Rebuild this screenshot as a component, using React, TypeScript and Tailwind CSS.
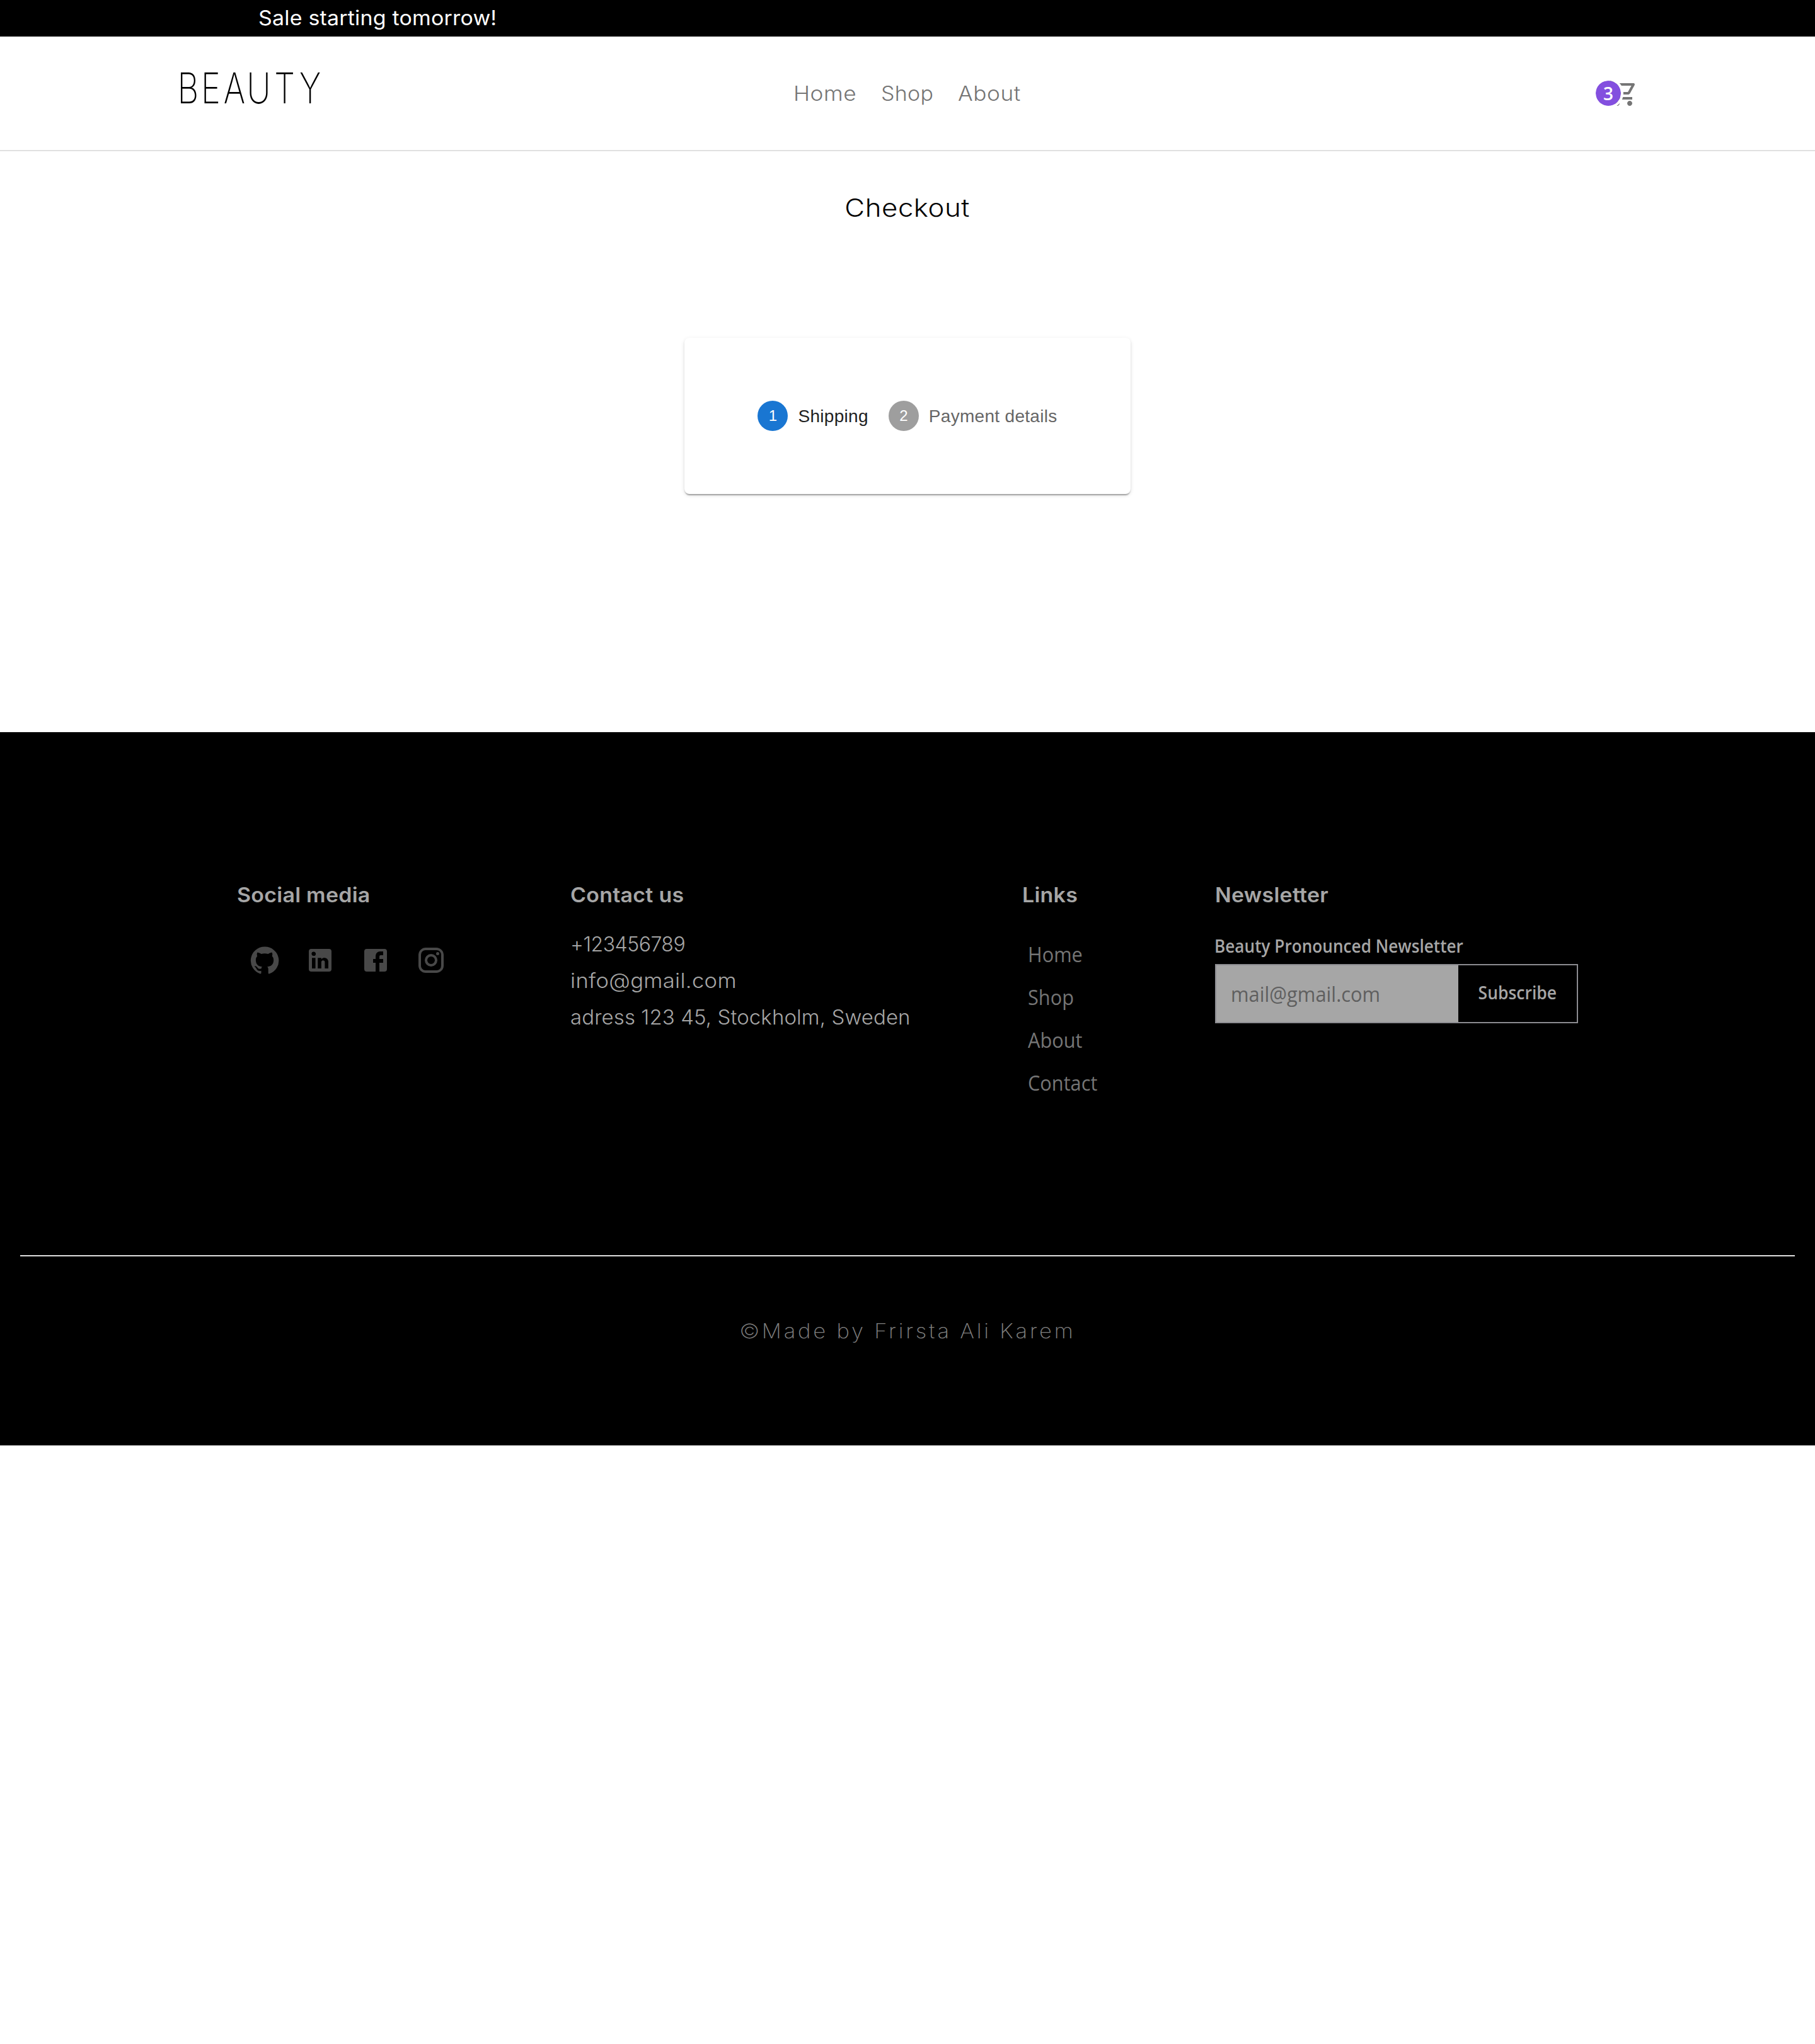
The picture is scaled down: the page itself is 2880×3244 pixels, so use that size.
import React from "react";

const socials = [
  {
    name: "GitHub",
    path: "M12 1.27a11 11 0 00-3.48 21.46c.55.09.73-.28.73-.55v-1.84c-3.03.64-3.67-1.46-3.67-1.46-.55-1.29-1.28-1.65-1.28-1.65-.92-.65.1-.65.1-.65 1.1 0 1.73 1.1 1.73 1.1.92 1.65 2.57 1.2 3.21.92a2 2 0 01.64-1.47c-2.47-.27-5.04-1.19-5.04-5.5 0-1.1.46-2.1 1.2-2.84a3.76 3.76 0 010-2.93s.91-.28 3.11 1.1c1.8-.49 3.7-.49 5.5 0 2.1-1.38 3.02-1.1 3.02-1.1a3.76 3.76 0 01.1 2.93c.83.74 1.2 1.74 1.2 2.94 0 4.21-2.57 5.13-5.04 5.4.45.37.82.92.82 2.02v3.03c0 .27.1.64.73.55A11 11 0 0012 1.27",
  },
  {
    name: "LinkedIn",
    path: "M19 3a2 2 0 0 1 2 2v14a2 2 0 0 1-2 2H5a2 2 0 0 1-2-2V5a2 2 0 0 1 2-2h14m-.5 15.5v-5.3a3.26 3.26 0 0 0-3.26-3.26c-.85 0-1.84.52-2.32 1.3v-1.11h-2.79v8.37h2.79v-4.93c0-.77.62-1.4 1.39-1.4a1.4 1.4 0 0 1 1.4 1.4v4.93h2.79M6.88 8.56a1.68 1.68 0 0 0 1.68-1.68c0-.93-.75-1.69-1.68-1.69a1.69 1.69 0 0 0-1.69 1.69c0 .93.76 1.68 1.69 1.68m1.39 9.94v-8.37H5.5v8.37h2.77z",
  },
  {
    name: "Facebook",
    path: "M5 3h14a2 2 0 0 1 2 2v14a2 2 0 0 1-2 2H5a2 2 0 0 1-2-2V5a2 2 0 0 1 2-2m13 2h-2.5A3.5 3.5 0 0 0 12 8.5V11h-2v3h2v7h3v-7h3v-3h-3V9a1 1 0 0 1 1-1h2V5z",
  },
  {
    name: "Instagram",
    path: "M7.8 2h8.4C19.4 2 22 4.6 22 7.8v8.4a5.8 5.8 0 0 1-5.8 5.8H7.8C4.6 22 2 19.4 2 16.2V7.8A5.8 5.8 0 0 1 7.8 2m-.2 2A3.6 3.6 0 0 0 4 7.6v8.8C4 18.39 5.61 20 7.6 20h8.8a3.6 3.6 0 0 0 3.6-3.6V7.6C20 5.61 18.39 4 16.4 4H7.6m9.65 1.5a1.25 1.25 0 0 1 1.25 1.25A1.25 1.25 0 0 1 17.25 8 1.25 1.25 0 0 1 16 6.75a1.25 1.25 0 0 1 1.25-1.25M12 7a5 5 0 0 1 5 5 5 5 0 0 1-5 5 5 5 0 0 1-5-5 5 5 0 0 1 5-5m0 2a3 3 0 0 0-3 3 3 3 0 0 0 3 3 3 3 0 0 0 3-3 3 3 0 0 0-3-3z",
  },
];

const navLinks = [
  { label: "Home", slot: "w-[139px]", text: "scale-x-[1.1] tracking-[0.5px]" },
  { label: "Shop", slot: "w-[122px]", text: "scale-x-[1.06] tracking-[0.3px]" },
  { label: "About", slot: "w-[102px]", text: "scale-x-[1.1] tracking-[0.5px]" },
];

const contactLines = [
  { text: "+123456789", className: "tracking-[-0.5px]" },
  { text: "info@gmail.com", className: "scale-x-[1.08] tracking-[0.3px]" },
  { text: "adress 123 45, Stockholm, Sweden", className: "scale-x-[1.03] tracking-[0.1px]" },
];

const footerLinks = ["Home", "Shop", "About", "Contact"];

function Logo() {
  return (
    <svg width="240" height="100" viewBox="0 0 240 100" className="overflow-visible" aria-label="Beauty">
      <text
        transform="scale(0.78 1)"
        x="2 50 96 143 199 250"
        y="66"
        className="fill-black font-['Inter',sans-serif] text-[67px] font-extralight"
      >
        BEAUTY
      </text>
    </svg>
  );
}

function Cart() {
  return (
    <a href="#cart" className="relative block size-12 justify-self-end" aria-label="Cart">
      <svg viewBox="0 0 24 24" className="size-12 fill-[#757575]">
        <path d="M15.55 13c.75 0 1.41-.41 1.75-1.03l3.58-6.49c.37-.66-.11-1.48-.87-1.48H5.21l-.94-2H1v2h2l3.6 7.59-1.35 2.44C4.52 15.37 5.48 17 7 17h12v-2H7l1.1-2h7.45zM6.16 6h12.15l-2.76 5H8.53L6.16 6zM7 18c-1.1 0-1.99.9-1.99 2S5.9 22 7 22s2-.9 2-2-.9-2-2-2zm10 0c-1.1 0-1.99.9-1.99 2s.89 2 1.99 2 2-.9 2-2-.9-2-2-2z" />
      </svg>
      <span className="absolute top-0 -left-6 flex size-12 items-center justify-center rounded-full border-4 border-white bg-[#834fdf] bg-clip-padding font-['Open_Sans',sans-serif] text-[28px] leading-none font-semibold text-white">
        3
      </span>
    </a>
  );
}

function Step({ n, label, active }: { n: number; label: string; active?: boolean }) {
  return (
    <div className="flex items-center gap-4">
      <span
        className={
          active
            ? "flex size-12 items-center justify-center rounded-full bg-[#1976d2] text-2xl text-white"
            : "flex size-12 items-center justify-center rounded-full bg-[#9e9e9e] text-2xl text-white"
        }
      >
        {n}
      </span>
      <span
        className={
          active
            ? "pt-0.5 text-[28px] tracking-[0.3px] text-[#212121]"
            : "pt-0.5 text-[28px] tracking-[0.3px] text-[#666666]"
        }
      >
        {label}
      </span>
    </div>
  );
}

function Heading({ children }: { children: string }) {
  return (
    <h2 className="w-fit origin-left scale-x-[1.06] pt-px font-semibold tracking-[0.25px]">{children}</h2>
  );
}

export default function App() {
  return (
    <div className="min-h-[3244px] bg-white font-['Inter',sans-serif] text-[32px] leading-[48px]">
      <div className="flex h-[58px] items-center bg-black pl-[410px] text-white">
        <p className="origin-left scale-x-[1.06] tracking-[0.2px]">Sale starting tomorrow!</p>
      </div>

      <header className="grid h-[182px] grid-cols-[1fr_auto_1fr] items-center border-b-2 border-[#e0e0e0] px-[280px]">
        <Logo />
        <nav className="flex pt-0.5 font-light text-[#757575]">
          {navLinks.map((l) => (
            <a key={l.label} href="#nav" className={l.slot}>
              <span className={`inline-block origin-left ${l.text}`}>{l.label}</span>
            </a>
          ))}
        </nav>
        <Cart />
      </header>

      <main className="flex h-[922px] flex-col items-center pt-[66px]">
        <h1 className="scale-x-[1.12] text-[39px] leading-[48px] font-light tracking-[0.5px] text-black">Checkout</h1>
        <section className="mt-[182px] flex h-[248px] w-[708px] items-center justify-center gap-8 rounded-lg bg-white font-['Liberation_Sans',sans-serif] shadow-[0_4px_2px_-2px_rgba(0,0,0,0.2),0_2px_2px_0_rgba(0,0,0,0.14),0_2px_6px_0_rgba(0,0,0,0.12)]">
          <Step n={1} label="Shipping" active />
          <Step n={2} label="Payment details" />
        </section>
      </main>

      <footer className="h-[1132px] bg-black text-[#a6a6a6]">
        <div className="grid h-[830px] grid-cols-[529px_717px_306px_576px] items-start pt-[234px] pl-[376px]">
          <div>
            <Heading>Social media</Heading>
            <div className="mt-[55px] ml-5 flex gap-10">
              {socials.map((s) => (
                <a key={s.name} href="#social" aria-label={s.name}>
                  <svg viewBox="0 0 24 24" className="size-12 fill-[#484848]">
                    <path d={s.path} />
                  </svg>
                </a>
              ))}
            </div>
          </div>

          <div>
            <Heading>Contact us</Heading>
            <div className="mt-[25px] leading-[58px] font-light">
              {contactLines.map((c) => (
                <p key={c.text} className={`w-fit origin-left ${c.className}`}>
                  {c.text}
                </p>
              ))}
            </div>
          </div>

          <div>
            <Heading>Links</Heading>
            <ul className="mt-9 ml-[9px] font-['Open_Sans',sans-serif] leading-[68px] text-[#757575]">
              {footerLinks.map((l) => (
                <li key={l} className="w-fit origin-left scale-x-[0.96]">
                  {l}
                </li>
              ))}
            </ul>
          </div>

          <div>
            <Heading>Newsletter</Heading>
            <div className="font-['Open_Sans',sans-serif]">
              <label className="mt-9 -ml-px block w-fit origin-left scale-x-[0.935] text-[28px] leading-10 font-semibold">
                Beauty Pronounced Newsletter
              </label>
              <div className="mt-[9px] flex h-[94px] border-2 border-[#8c8c91]">
                <div className="flex w-[384px] items-center bg-[#a6a6a6] pt-0.5 pl-[23px] text-[#5f5f5f]">
                  <span className="origin-left scale-x-[0.965]">mail@gmail.com</span>
                </div>
                <button className="flex-1 bg-black pb-1 text-[28px] font-semibold text-[#a6a6a6]">
                  <span className="inline-block scale-x-[0.945]">Subscribe</span>
                </button>
              </div>
            </div>
          </div>
        </div>
        <div className="mx-8 h-0.5 bg-[#e0e0e0]" />
        <p className="mt-[95px] scale-x-[1.08] text-center font-extralight tracking-[3.5px] text-[#808080]">
          ©Made by Frirsta Ali Karem
        </p>
      </footer>
    </div>
  );
}
